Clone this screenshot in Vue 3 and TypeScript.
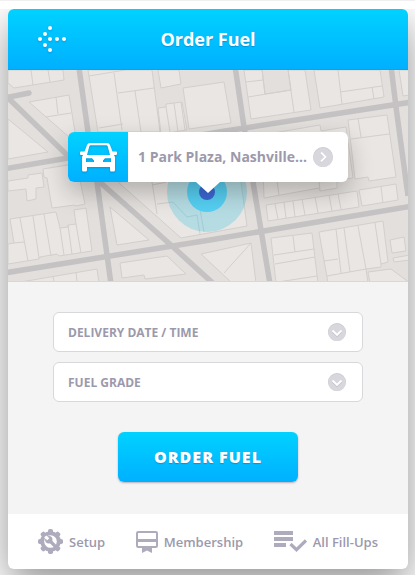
<script setup lang="ts">
import { ref } from 'vue'

type Line = [number, number, number, number]

interface Field {
  id: string
  label: string
  options: string[]
}

const fields: Field[] = [
  { id: 'delivery', label: 'DELIVERY DATE / TIME', options: [] },
  { id: 'grade', label: 'FUEL GRADE', options: [] },
]

const selected = ref<Record<string, string>>({ delivery: '', grade: '' })

const blocks: string[] = [
  '8,70 8,83 14,88 64,80 63,70',
  '29,102 69,95 75,132 69,137',
  '8,119 48,152 8,159',
  '8,181 28,178 28,175 42,173 44,187 36,188 36,199 27,201 26,189 8,191',
  '43,169 68,165 80,180 85,204 76,206 75,205 52,208 47,178 44,177',
  '88,70 152,70 160,132 98,132',
  '158,70 179,70 181,84 161,88',
  '158,108 166,107 166,104 182,102 187,130 161,134',
  '183,88 224,82 231,123 189,129',
  '244,70 305,70 311,110 251,119',
  '314,70 380,70 384,97 320,108',
  '399,70 403,96 410,95 410,70',
  '348,120 387,115 396,177 369,181 368,177 355,179',
  '262,135 320,125 321,131 346,127 353,178 337,180 337,188 320,191 319,188 264,198',
  '266,205 357,191 359,207 268,221',
  '359,190 396,184 398,200 362,206',
  '271,238 312,233 318,283 276,283',
  '319,232 383,221 388,262 381,264 381,267 366,269 368,283 328,283',
  '368,272 391,269 410,283 370,283',
  '390,240 404,237 406,251 392,253',
  '393,258 410,255 410,260 394,262',
  '201,254 251,243 256,283 232,283',
  '110,207 149,240 117,245',
  '118,182 181,238 247,226 240,175',
  '120,263 167,256 186,274 145,279 144,275 122,278',
  '15,283 97,269 99,283',
  '10,219 56,212 60,228 68,227 68,225 76,224 74,210 86,208 92,251 59,256 57,254 40,257 39,259 8,264 8,244 14,243',
]

const lots: Line[] = [
  [31, 70, 33, 85], [48, 70, 50, 82],
  [56, 97, 58, 114], [46, 117, 71, 113],
  [89, 76, 125, 70], [114, 73, 122, 130], [99, 128, 123, 124], [118, 93, 154, 88], [135, 91, 141, 132],
  [166, 107, 170, 132], [174, 103, 178, 132], [181, 102, 185, 130],
  [246, 82, 263, 80], [248, 97, 291, 90], [262, 70, 265, 94], [288, 70, 294, 112],
  [338, 70, 342, 104], [340, 92, 382, 86], [372, 87, 374, 99],
  [358, 118, 361, 137], [351, 139, 389, 134],
  [275, 204, 278, 219], [284, 202, 286, 218], [293, 201, 295, 217], [302, 199, 305, 215],
  [315, 197, 318, 213], [329, 195, 332, 211], [338, 194, 341, 209], [381, 187, 383, 203],
  [277, 181, 279, 195], [319, 181, 320, 190],
  [293, 236, 295, 252], [274, 255, 314, 249], [275, 264, 315, 257], [278, 282, 317, 276],
  [336, 229, 341, 273], [344, 228, 350, 272], [358, 226, 366, 269], [375, 223, 381, 264],
  [324, 261, 338, 259], [327, 276, 366, 269],
  [251, 243, 224, 273],
  [152, 182, 157, 214], [152, 185, 167, 182], [198, 198, 204, 232],
  [53, 276, 54, 282], [76, 272, 77, 282],
  [14, 243, 24, 242], [20, 218, 28, 261], [33, 216, 39, 258], [44, 214, 51, 256],
  [60, 228, 64, 255], [68, 225, 72, 254], [76, 224, 81, 253],
]
</script>

<template>
  <div class="page">
    <div class="stage">
      <main class="card">
        <header class="top">
          <button class="back" type="button" aria-label="Back">
            <svg width="28" height="28" viewBox="0 0 28 28" fill="#fff">
              <circle cx="2" cy="14" r="2" /><circle cx="7" cy="9" r="2" /><circle cx="12" cy="3" r="2" />
              <circle cx="12" cy="14" r="2" /><circle cx="19" cy="14" r="2" /><circle cx="26" cy="14" r="2" />
              <circle cx="7" cy="20" r="2" /><circle cx="12" cy="25" r="2" />
            </svg>
          </button>
          <h1>Order Fuel</h1>
        </header>

        <section class="map">
          <svg class="streets" viewBox="8 70 400 211" preserveAspectRatio="xMidYMid slice" aria-hidden="true">
            <rect x="0" y="60" width="420" height="230" fill="#e2dfdc" />
            <g fill="#e9e6e3" stroke="#d2cfcd" stroke-width="1">
              <polygon v-for="b in blocks" :key="b" :points="b" />
              <polygon points="262,69 288,69 291,90 265,94" fill="#e2dfdc" />
              <path d="M157 204L173 202L187 217L197 215L200 234" fill="none" />
              <line v-for="(l, i) in lots" :key="i" :x1="l[0]" :y1="l[1]" :x2="l[2]" :y2="l[3]" />
            </g>
            <g fill="none" stroke="#c5c2c4" stroke-width="5.5">
              <path d="M79 68L88 132L97 182L111 284" />
              <path d="M6 96L68 156L102 184L172 246L216 286" />
              <path d="M4 98L29 93" stroke-linecap="round" />
              <path d="M4 169L68 158L225 131L412 102" />
              <path d="M4 273L210 240L412 206" />
              <path d="M235 66L244 127L253 182L270 284" />
              <path d="M391 66L396 107L408 196" />
            </g>
            <circle cx="207" cy="192" r="40" fill="#27bfe6" fill-opacity=".27" />
            <circle cx="207" cy="192" r="20" fill="#56cff3" />
            <circle cx="207" cy="192" r="8" fill="#3d68d2" />
          </svg>
          <button class="callout" type="button">
            <span class="vehicle">
              <svg width="37" height="29" viewBox="0 0 37 29" aria-hidden="true">
                <path
                  fill="#fff"
                  fill-rule="evenodd"
                  d="M10 0H27Q29.300 0 30 2L32.500 8.500H36Q37 8.500 37 9.500V11Q37 12 36 12H34L35 14V27Q35 28.500 33.500 28.500H31.500Q30 28.500 30 27V24H7V27Q7 28.500 5.500 28.500H3.500Q2 28.500 2 27V14L3 12H1Q0 12 0 11V9.500Q0 8.500 1 8.500H4.500L7 2Q7.700 0 10 0ZM10.500 2.300Q9.700 2.300 9.400 3.100L7 12H30L27.600 3.100Q27.300 2.300 26.500 2.300ZM6 15.300V19H14V17.500L12 15.300ZM31 15.300V19H23V17.500L25 15.300Z"
                />
              </svg>
            </span>
            <span class="address">1 Park Plaza, Nashville...</span>
            <svg class="go" width="20" height="20" viewBox="0 0 20 20" aria-hidden="true">
              <circle cx="10" cy="10" r="10" fill="#c9c8cf" />
              <circle cx="10" cy="10.500" r="9.700" fill="#d8d7dd" />
              <path d="M8 6L12.500 10.500L8 15" fill="none" stroke="#c3c2ca" stroke-width="1.800" />
              <path d="M8 5.500L12.500 10L8 14.500" fill="none" stroke="#fff" stroke-width="1.800" />
            </svg>
          </button>
        </section>

        <form class="order" @submit.prevent>
          <div v-for="f in fields" :key="f.id" class="field">
            <select :id="f.id" v-model="selected[f.id]" :aria-label="f.label">
              <option value="">{{ f.label }}</option>
              <option v-for="o in f.options" :key="o" :value="o">{{ o }}</option>
            </select>
            <svg class="chevron" width="18" height="18" viewBox="0 0 18 18" aria-hidden="true">
              <circle cx="9" cy="9" r="9" fill="#c9c8cf" />
              <circle cx="9" cy="9.500" r="8.700" fill="#d8d7dd" />
              <path d="M4.500 8.500L9 13L13.500 8.500" fill="none" stroke="#c3c2ca" stroke-width="1.800" />
              <path d="M4.500 7.500L9 12L13.500 7.500" fill="none" stroke="#fff" stroke-width="1.800" />
            </svg>
          </div>
          <button class="submit" type="submit">ORDER FUEL</button>
        </form>

        <nav class="tabs">
          <a href="#setup">
            <svg width="25" height="25" viewBox="0 0 25 25" aria-hidden="true">
              <g fill="#aeabbd">
                <circle cx="12.500" cy="12.500" r="10.300" />
                <rect v-for="n in 8" :key="n" x="10" y="0" width="5" height="5" rx="1.800" :transform="`rotate(${n * 45} 12.5 12.5)`" />
              </g>
              <circle cx="12.500" cy="12.500" r="6.300" fill="#fff" />
              <path d="M12 12L16.500 16.500" stroke="#aeabbd" stroke-width="3.200" stroke-linecap="round" />
              <circle cx="10.800" cy="10.800" r="3.700" fill="#aeabbd" />
              <path d="M6.500 8L8.500 6.500L11.300 9.200L9.400 11.200L6.500 9Z" fill="#fff" />
            </svg>
            <span>Setup</span>
          </a>
          <a href="#membership">
            <svg width="22" height="22" viewBox="0 0 22 22" aria-hidden="true">
              <rect x="1" y="1" width="20" height="15" rx="1.200" fill="none" stroke="#aeabbd" stroke-width="2" />
              <path d="M1 8H21V11H1ZM6 16H16V22L11 19.500L6 22Z" fill="#aeabbd" />
            </svg>
            <span>Membership</span>
          </a>
          <a href="#fillups">
            <svg width="33" height="22" viewBox="0 0 33 22" aria-hidden="true">
              <path d="M0 0H19V4H0ZM0 6H19V10H0ZM0 12H12V16H0Z" fill="#aeabbd" />
              <path d="M16.500 13L22.500 18.700L32 9.500" fill="none" stroke="#aeabbd" stroke-width="3.200" />
            </svg>
            <span>All Fill-Ups</span>
          </a>
        </nav>
      </main>
    </div>
  </div>
</template>

<style>
body {
  background: #fff;
}
</style>

<style scoped>
.page {
  box-sizing: border-box;
  min-height: 100vh;
  display: flex;
  flex-direction: column;
  padding-top: 8px;
  border-top: 1px solid #f0f0f0;
  font-family: "Open Sans", "Noto Sans", sans-serif;
}

.stage {
  flex: 1;
  padding: 0 7px 6px 8px;
  overflow: hidden;
}

.card {
  border-radius: 6px;
  background: #fff;
  box-shadow: 0 15px 40px rgba(0, 0, 0, 0.43);
}

button,
select {
  margin: 0;
  font-family: inherit;
  cursor: pointer;
}

.top {
  box-sizing: border-box;
  height: 61px;
  display: grid;
  grid-template-columns: 1fr auto 1fr;
  align-items: center;
  padding: 0 30px;
  border-bottom: 1px solid #00a6f8;
  border-radius: 6px 6px 0 0;
  background: linear-gradient(#00d2ff, #00b0ff);
}

.back {
  display: flex;
  justify-self: start;
  padding: 0;
  border: 0;
  background: none;
  filter: drop-shadow(0 1px 1px rgba(0, 60, 120, 0.25));
}

h1 {
  margin: 0;
  font-size: 18px;
  line-height: 24px;
  font-weight: 700;
  color: #fff;
  text-shadow: 0 1px 1px rgba(0, 60, 120, 0.3);
}

.map {
  position: relative;
  border-bottom: 1px solid #d8d7dc;
}

.streets {
  display: block;
  width: 100%;
  height: 211px;
}

.callout {
  position: absolute;
  top: 62px;
  left: 50%;
  width: 280px;
  height: 50px;
  display: flex;
  align-items: center;
  margin-left: -140px;
  padding: 0 15px 0 0;
  border: 0;
  border-radius: 6px;
  background: #fff;
  box-shadow: 0 10px 25px rgba(0, 0, 0, 0.25);
}

.callout::after {
  content: "";
  position: absolute;
  top: 100%;
  left: 50%;
  margin-left: -12px;
  border: 12px solid transparent;
  border-top: 11px solid #fff;
  border-bottom: 0;
}

.vehicle {
  width: 60px;
  height: 50px;
  display: flex;
  align-items: center;
  justify-content: center;
  flex: none;
  border-radius: 6px 0 0 6px;
  background: linear-gradient(#00d2ff, #00b0ff);
}

.vehicle svg {
  filter: drop-shadow(0 1px 1px rgba(0, 60, 120, 0.3));
}

.address {
  flex: 1;
  padding-left: 10px;
  font-size: 14px;
  line-height: 20px;
  font-weight: 700;
  text-align: left;
  white-space: nowrap;
  color: #9c99ac;
}

.go {
  flex: none;
}

.order {
  display: flex;
  flex-direction: column;
  gap: 10px;
  padding: 30px 45px 32px;
  background: #f4f4f4;
}

.field {
  position: relative;
  display: flex;
}

select {
  box-sizing: border-box;
  width: 100%;
  height: 40px;
  padding: 0 44px 0 14px;
  border: 1px solid #d8d7dc;
  border-radius: 6px;
  background: #fff;
  appearance: none;
  font-size: 12px;
  font-weight: 700;
  color: #9c99ac;
}

.chevron {
  position: absolute;
  top: 11px;
  right: 17px;
  pointer-events: none;
}

.submit {
  align-self: center;
  width: 180px;
  height: 50px;
  margin-top: 20px;
  padding: 0;
  border: 0;
  border-radius: 6px;
  background: linear-gradient(#00d2ff, #00b0ff);
  box-shadow: 0 1px 2px rgba(60, 40, 80, 0.35);
  font-size: 16px;
  font-weight: 800;
  letter-spacing: 1px;
  color: #fff;
  text-shadow: 0 1px 1px rgba(0, 60, 120, 0.3);
}

.tabs {
  height: 55px;
  display: flex;
  align-items: center;
  justify-content: space-between;
  padding: 0 30px;
}

.tabs a {
  display: flex;
  align-items: center;
  gap: 6px;
  font-size: 13px;
  line-height: 20px;
  font-weight: 600;
  color: #9c99ac;
  text-decoration: none;
}
</style>
